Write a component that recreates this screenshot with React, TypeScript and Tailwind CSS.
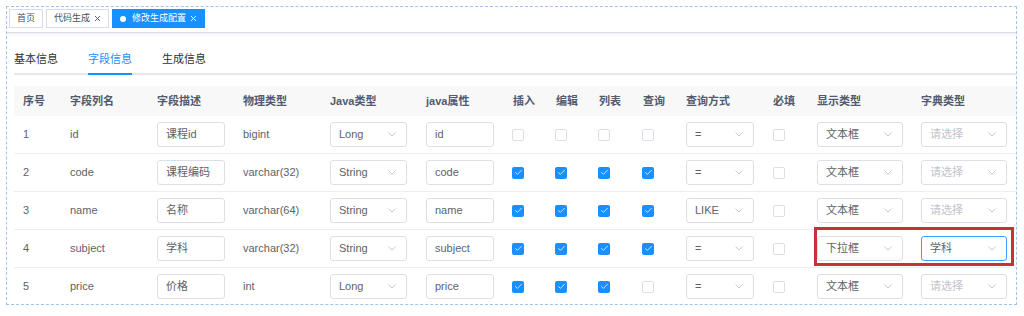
import { Check } from "lucide-react";

type Row = {
  no: number;
  column: string;
  comment: string;
  dbType: string;
  javaType: string;
  javaField: string;
  checks: boolean[];
  queryType: string;
  html: string;
  dict: string;
};

const rows: Row[] = [
  { no: 1, column: "id", comment: "课程id", dbType: "bigint", javaType: "Long", javaField: "id", checks: [false, false, false, false], queryType: "=", html: "文本框", dict: "" },
  { no: 2, column: "code", comment: "课程编码", dbType: "varchar(32)", javaType: "String", javaField: "code", checks: [true, true, true, true], queryType: "=", html: "文本框", dict: "" },
  { no: 3, column: "name", comment: "名称", dbType: "varchar(64)", javaType: "String", javaField: "name", checks: [true, true, true, true], queryType: "LIKE", html: "文本框", dict: "" },
  { no: 4, column: "subject", comment: "学科", dbType: "varchar(32)", javaType: "String", javaField: "subject", checks: [true, true, true, true], queryType: "=", html: "下拉框", dict: "学科" },
  { no: 5, column: "price", comment: "价格", dbType: "int", javaType: "Long", javaField: "price", checks: [true, true, true, false], queryType: "=", html: "文本框", dict: "" },
];

const headers = ["序号", "字段列名", "字段描述", "物理类型", "Java类型", "java属性", "插入", "编辑", "列表", "查询", "查询方式", "必填", "显示类型", "字典类型"];

const grid =
  "grid grid-cols-[47px_87px_86px_87px_96px_87px_43px_43px_44px_43px_87px_44px_104px_98px]";

const Chevron = () => (
  <svg width="8" height="5" viewBox="0 0 8 5" fill="none">
    <path d="M0.5 0.5L4 4L7.5 0.5" stroke="#c0c4cc" strokeWidth="0.9" />
  </svg>
);

const Box = ({ checked }: { checked: boolean }) =>
  checked ? (
    <span className="w-[12px] h-[12px] rounded-[2px] bg-[#1890ff] flex items-center justify-center">
      <Check size={9} strokeWidth={2} color="#ffffff" />
    </span>
  ) : (
    <span className="w-[12px] h-[12px] rounded-[2px] border border-[#dcdfe6] bg-white" />
  );

const Input = ({ value, w }: { value: string; w: string }) => (
  <div className={`${w} h-[25px] border border-[#dcdfe6] rounded-[3px] flex items-center pl-[8px] text-[#606266]`}>
    {value}
  </div>
);

const Select = ({ value, w, focus }: { value: string; w: string; focus?: boolean }) => (
  <div
    className={`${w} h-[25px] border rounded-[3px] flex items-center justify-between pl-[8px] pr-[10px] ${
      focus ? "border-[#409eff]" : "border-[#dcdfe6]"
    }`}
  >
    <span className={value ? "text-[#606266]" : "text-[#c0c4cc]"}>{value || "请选择"}</span>
    <Chevron />
  </div>
);

const Close = ({ color }: { color: string }) => (
  <svg width="7" height="7" viewBox="0 0 7 7">
    <path d="M1 1L6 6M6 1L1 6" stroke={color} strokeWidth="0.9" />
  </svg>
);

export default function App() {
  return (
    <div
      className="relative w-[1024px] h-[316px] bg-white overflow-hidden text-[11px]"
      style={{ fontFamily: '"Liberation Sans", "Noto Sans CJK SC", sans-serif' }}
    >
      <div className="ml-[6px] mt-[6px] w-[1011px] h-[299px] border border-dashed border-[#9fc3ea] overflow-hidden">
        {/* tags view */}
        <div className="h-[26px] border-b border-[#d8dce5] shadow-[0_1px_3px_rgba(0,0,0,0.08)] flex items-start gap-[3px] pl-[2px] pt-[2px] text-[9px]">
          <div className="h-[19px] border border-[#d8dce5] px-[7px] flex items-center text-[#495060]">首页</div>
          <div className="h-[19px] border border-[#d8dce5] px-[7px] flex items-center gap-[4px] text-[#495060]">
            代码生成
            <Close color="#495060" />
          </div>
          <div className="h-[19px] border border-[#1890ff] bg-[#1890ff] px-[7px] flex items-center gap-[4px] text-white">
            <span className="w-[6px] h-[6px] rounded-full bg-white mr-[2px]" />
            修改生成配置
            <Close color="#ffffff" />
          </div>
        </div>

        <div className="pl-[7px]">
          {/* tabs */}
          <div className="mt-[12px] h-[28px] flex gap-[30px] text-[#303133]">
            <div className="flex items-center">基本信息</div>
            <div className="flex items-center text-[#1890ff] relative">
              字段信息
              <span className="absolute left-0 right-0 bottom-[-2px] h-[2px] bg-[#1890ff]" />
            </div>
            <div className="flex items-center">生成信息</div>
          </div>
          <div className="h-[2px] bg-[#e4e7ed]" />

          {/* table */}
          <div className="mt-[11px]">
            <div className={`${grid} h-[30px] bg-[#f8f8f9] text-[#515a6e] font-semibold`}>
              {headers.map((h) => (
                <div key={h} className="pl-[9px] flex items-center">
                  {h}
                </div>
              ))}
            </div>
            {rows.map((r) => (
              <div key={r.no} className={`${grid} h-[38px] border-b border-[#ebeef5] text-[#606266]`}>
                <div className="pl-[9px] flex items-center">{r.no}</div>
                <div className="pl-[9px] flex items-center">{r.column}</div>
                <div className="pl-[9px] flex items-center">
                  <Input value={r.comment} w="w-[68px]" />
                </div>
                <div className="pl-[9px] flex items-center">{r.dbType}</div>
                <div className="pl-[9px] flex items-center">
                  <Select value={r.javaType} w="w-[77px]" />
                </div>
                <div className="pl-[9px] flex items-center">
                  <Input value={r.javaField} w="w-[68px]" />
                </div>
                {r.checks.map((c, i) => (
                  <div key={i} className="pl-[8px] flex items-center">
                    <Box checked={c} />
                  </div>
                ))}
                <div className="pl-[9px] flex items-center">
                  <Select value={r.queryType} w="w-[68px]" />
                </div>
                <div className="pl-[9px] flex items-center">
                  <Box checked={false} />
                </div>
                <div className="pl-[9px] flex items-center">
                  <Select value={r.html} w="w-[86px]" />
                </div>
                <div className="pl-[9px] flex items-center">
                  <Select value={r.dict} w="w-[86px]" focus={r.no === 4} />
                </div>
              </div>
            ))}
          </div>
        </div>
      </div>

      {/* annotation */}
      <div className="absolute left-[814px] top-[227px] w-[200px] h-[39px] border-[3px] border-[#c8303a]" />
    </div>
  );
}
